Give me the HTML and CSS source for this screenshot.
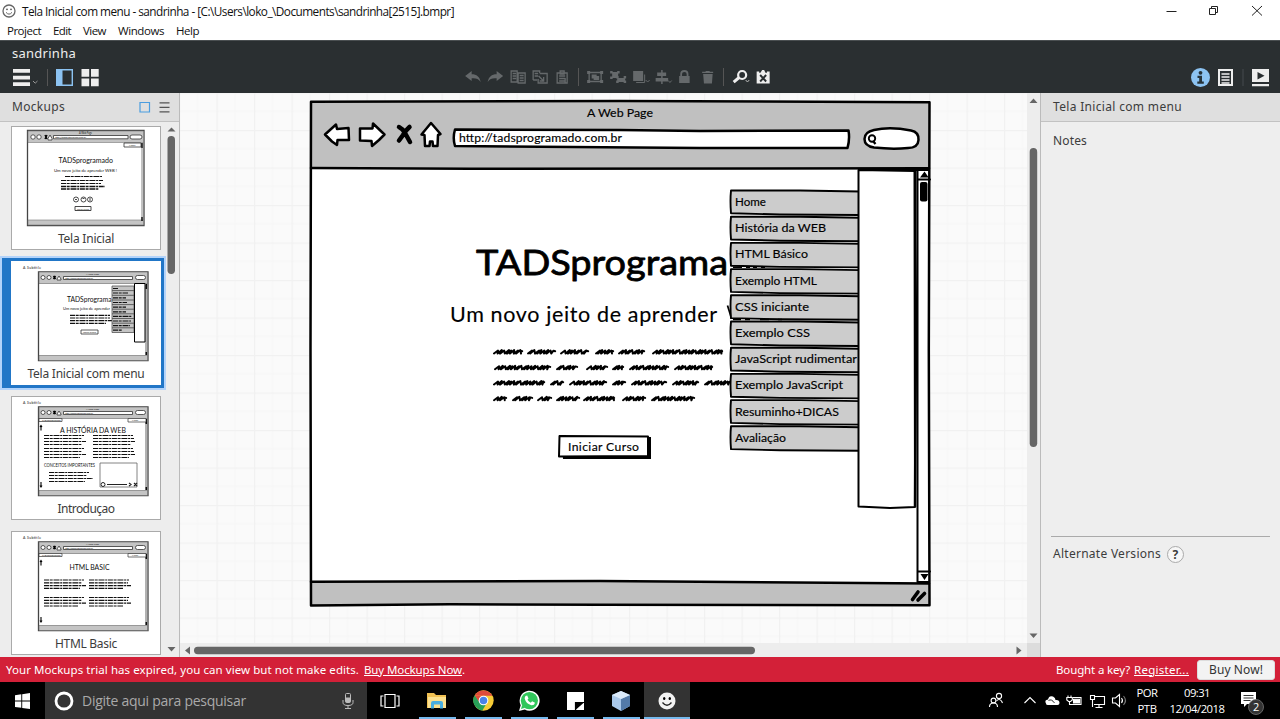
FILE: index.html
```html
<!DOCTYPE html>
<html lang="pt">
<head>
<meta charset="utf-8">
<title>Tela Inicial com menu - sandrinha</title>
<link rel="stylesheet" href="styles.css">
</head>
<body>
<div class="screen">
  <header class="titlebar">
    <div class="title-row">
      <svg class="app-icon" width="14" height="14" viewBox="0 0 14 14"><circle cx="7" cy="7" r="6" fill="#fff" stroke="#666" stroke-width="1.3"/><circle cx="5" cy="5.3" r=".9" fill="#555"/><circle cx="9" cy="5.3" r=".9" fill="#555"/><path d="M4 8.3Q7 12 10 8.3" fill="none" stroke="#666"/></svg>
      <span data-fit="432">Tela Inicial com menu - sandrinha - [C:\Users\loko_\Documents\sandrinha[2515].bmpr]</span>
      <svg class="window-buttons" width="110" height="20" viewBox="1160 0 110 20" fill="none" stroke="#222"><path d="M1166.5 10.5h10M1252 5l10 9.500M1262 5l-10 9.500"/><path d="M1209.500 7.500h6v6h-6zM1211.500 7v-1.500h6v6h-1.500"/></svg>
    </div>
    <nav class="menu-row"><span data-fit="34">Project</span><span data-fit="18">Edit</span><span data-fit="23">View</span><span data-fit="46">Windows</span><span data-fit="23">Help</span></nav>
  </header>

  <section class="toolbar">
    <div class="project-name"><span data-fit="64">sandrinha</span></div>
    <div class="tools">
      <svg class="left-tools" width="100" height="20" viewBox="0 67 100 20">
        <path d="M13 69h17v3.700H13zM13 75.700h17v3.700H13zM13 82.300h17v3.700H13z" fill="#eee"/>
        <path d="M33 81l2.200 2.200L37.500 81" fill="none" stroke="#999"/><path d="M47.500 69v17" stroke="#555"/>
        <path d="M56.700 69.700h15.600v15.600H56.700z" fill="none" stroke="#8cc3f2" stroke-width="1.400"/><path d="M56 69h6.500v17H56z" fill="#8cc3f2"/>
        <path d="M81.500 69h7.700v7.700h-7.700zM91 69h7.700v7.700H91zM81.500 78.500h7.700v7.700h-7.700zM91 78.500h7.700v7.700H91z" fill="#eee"/>
      </svg>
      <div class="center-tools">
        <svg class="tool" viewBox="0 0 22 20"><path d="M3 9L9.500 4v3.200c5 0 8 2.500 9 7.800-2.200-3.500-5-4-9-3.700V14z"/></svg>
        <svg class="tool" viewBox="0 0 22 20"><path d="M19 9L12.500 4v3.200c-5 0-8 2.500-9 7.800 2.200-3.500 5-4 9-3.700V14z"/></svg>
        <svg class="tool line" viewBox="0 0 22 20"><path d="M4 4h6v11H4zM11 6h7v10h-7zM5.500 6.500H9M5.500 9H9M5.500 11.500H9M12.500 8.500h4M12.500 11h4M12.500 13.500h4"/></svg>
        <svg class="tool line" viewBox="0 0 22 20"><path d="M4 13V4h6.500v2M4 13h4M5.500 6.500H9M5.500 9H9M10.500 6.500h7.500v9.500h-9v-4M9.500 9l4.500 4.500M14.500 10v4h-4"/></svg>
        <svg class="tool line" viewBox="0 0 22 20"><path d="M6 6h10v10H6zM9 4h4v3H9zM8 9h6M8 11.500h6M8 14h6M14 11v5"/></svg>
        <i class="divider"></i>
        <svg class="tool line" viewBox="0 0 22 20"><path d="M5 5.500h12v9H5z"/><path class="solid" d="M3 4h3v3H3zM16 4h3v3h-3zM3 13h3v3H3zM16 13h3v3h-3zM7.500 7.500h5V9H15v4H9.500v-1.500h-2z"/></svg>
        <svg class="tool line" viewBox="0 0 22 20"><path class="solid" d="M3 4h2.500v2.500H3zM10 4h2.500v2.500H10zM3 9.500h2.500V12H3zM5 5h6v6H5zM9 9h2.500v2h5V9H19v2.500h-1v2h1V16h-2.500v-1h-5v1H9v-2.500h1v-2H9z"/></svg>
        <svg class="tool" viewBox="0 0 22 20"><path d="M4 4h10v10H4z"/><path d="M7 15.500h8.500V7.500" class="stroke"/><path class="stroke" d="M16.500 13l2 2 2-2"/></svg>
        <svg class="tool" viewBox="0 0 22 20"><path d="M10 3h1.500v2.500H15V9h-3.500v2H17v3.500h-5.500V17H10v-2.500H4.500V11H10V9H6V5.500h4z"/><path class="stroke" d="M17 13.500l1.800 2 1.800-2"/></svg>
        <svg class="tool" viewBox="0 0 22 20"><path d="M6 9h10.500v7H6z"/><path d="M8 10V7q0-3 3.200-3t3.200 3v3" fill="none" stroke="#65696b" stroke-width="1.800"/></svg>
        <svg class="tool" viewBox="0 0 22 20"><path d="M7 7h9.500l-.7 9.500h-8zM6 4.800h3.500V4h4v.8H17V6H6z"/></svg>
        <i class="divider"></i>
        <svg class="tool bright" viewBox="0 0 22 20"><circle cx="13" cy="8" r="4" fill="none" stroke="#eee" stroke-width="2.200"/><path d="M10 10.500l-5.500 4.700" stroke="#eee" stroke-width="3"/><path d="M16.500 13l1.800 2 1.800-2" fill="none" stroke="#bbb"/></svg>
        <svg class="tool bright" viewBox="0 0 22 20"><path d="M5.500 4.500H8v1.300h1.300L11 3h2l1.300 2.800h1.500V4.500h2.700v12h-13z"/><path d="M9 8l6 6.500M15 8l-6 6.500" stroke="#2a2f31" stroke-width="1.900"/></svg>
      </div>
      <svg class="right-tools" width="90" height="22" viewBox="1190 66 90 22"><circle cx="1200.500" cy="77.500" r="9.500" fill="#8cc3f2"/><circle cx="1200.500" cy="72.800" r="1.900" fill="#253239"/><path d="M1197.500 75.800h4.500v5.700h1.800v2.300h-6.500v-2.300h1.900v-3.400h-1.700z" fill="#253239"/><path d="M1219 70h13v15h-13z" fill="none" stroke="#eee" stroke-width="2"/><path d="M1221.500 74h8M1221.500 77h8M1221.500 80h8M1221.500 83h8" stroke="#eee" stroke-width="1.400"/><path d="M1243 69v17" stroke="#444b4e"/><path d="M1252 69h17v13h-17zM1252 84h17v2.200h-17z" fill="#eee"/><path d="M1257.500 72l7 3.700-7 3.700z" fill="#2a2f31"/></svg>
    </div>
  </section>

  <main class="workspace">
    <aside class="sidebar">
      <div class="panel-head"><span data-fit="53">Mockups</span>
        <svg width="32" height="12" viewBox="139 100 32 12"><path d="M140 101.500h9.500v9.500H140z" fill="none" stroke="#4a9de0" stroke-width="1.200"/><path d="M159.500 101.800h10M159.500 106.300h10M159.500 110.800h10" stroke="#555" stroke-width="1.200"/></svg>
      </div>
      <div class="list-area">
        <div class="cards">
          <article class="cell"><div class="card">
            <svg class="thumb" width="148" height="104" viewBox="1 1 148 104">
              <path d="M16.500 4.500H133V99.500H16.500z" fill="#fff" stroke="#444" stroke-width="1.300"/><path d="M17 5H132.500V16.500H17zM17 94h115.500v5H17z" fill="#c4c4c4" stroke="#777" stroke-width=".6"/>
              <g fill="#fff" stroke="#333" stroke-width=".8"><circle cx="22" cy="11" r="2.200"/><circle cx="28" cy="11" r="2.200"/><path d="M37 12.500l2-3.500 2 3.500v1.500h-4zM42.500 9.500H117v3.300H42.500z"/><rect x="119" y="9" width="12" height="4" rx="2"/><path d="M113 17h17v4h-17z"/></g>
              <path d="M34 9l2 4M36 9l-2 4M131 17v5M131 91v4" stroke="#000" stroke-width="1.400"/><path d="M131 17v77" stroke="#333" stroke-width=".6"/>
              <text x="68" y="8" class="mini" font-size="3" textLength="13" lengthAdjust="spacingAndGlyphs">A Web Page</text><text x="44" y="12.300" class="mini" font-size="2.600" textLength="31" lengthAdjust="spacingAndGlyphs">http://tadsprogramado.com.br</text><text x="118" y="20" class="mini" font-size="2.500">Menu</text>
              <text x="47.500" y="36.500" class="mini" font-size="7" textLength="54.500" lengthAdjust="spacingAndGlyphs">TADSprogramado</text><text x="43" y="45.500" class="mini" font-size="4.500" textLength="63" lengthAdjust="spacingAndGlyphs">Um novo jeito de aprender WEB !</text>
              <g class="greek"><path d="M54 50.500h37M50 54.500h42M50 57.500h40"/><path d="M50 60.500h44M50 63h38" stroke-width="1.500"/></g>
              <g fill="none" stroke="#333" stroke-width=".9"><circle cx="65" cy="73.500" r="2.500"/><circle cx="72.500" cy="73.500" r="2.500"/><circle cx="79" cy="73.500" r="2.500"/><path d="M64 73.500h2M71.500 72.500h2M79 72v3"/><path d="M64 80.500h16v4H64z"/></g><text x="66" y="83.600" class="mini" font-size="2.600" textLength="12" lengthAdjust="spacingAndGlyphs">Iniciar Curso</text>
            </svg><div class="label"><span data-fit="56">Tela Inicial</span></div>
          </div></article>
          <article class="cell selected"><div class="card">
            <svg class="thumb" width="148" height="104" viewBox="1 1 148 104"><use href="#mini-browser"/>
              <text x="56" y="41" class="mini" font-size="7" textLength="44.500" lengthAdjust="spacingAndGlyphs">TADSprograma</text><text x="52" y="49" class="mini" font-size="4.500" textLength="47" lengthAdjust="spacingAndGlyphs">Um novo jeito de aprender</text>
              <g class="greek"><path d="M59 54.300h40M59 57h40M59 59.700h44M59 62.400h36" stroke-width="1.200"/></g><path d="M70 69h17v4H70z" fill="#fff" stroke="#333" stroke-width=".8"/><text x="72" y="72" class="mini" font-size="2.600" textLength="13" lengthAdjust="spacingAndGlyphs">Iniciar Curso</text>
              <path d="M101 25h22v46.500h-22z" fill="#c4c4c4" stroke="#555" stroke-width=".8"/><path d="M101 29.600h22M101 34.300h22M101 39h22M101 43.600h22M101 48.200h22M101 52.800h22M101 57.500h22M101 62.200h22M101 66.800h22" stroke="#555" stroke-width=".9"/><g class="greek"><path d="M102 27.500h5M102 32h15M102 36.800h13M102 41.500h14M102 46.200h13M102 50.800h13M102 55.300h19M102 60h18M102 64.700h17M102 69.200h9"/></g>
              <path d="M123.500 22.500H134V81h-10.500z" fill="#fff" stroke="#000"/>
            </svg><div class="label"><span data-fit="117">Tela Inicial com menu</span></div>
          </div></article>
          <article class="cell"><div class="card">
            <svg class="thumb" width="148" height="104" viewBox="1 1 148 104"><use href="#mini-browser"/><use href="#mini-tabs"/>
              <text x="49" y="36.500" class="mini" font-size="7" textLength="66" lengthAdjust="spacingAndGlyphs">A HISTÓRIA DA WEB</text>
              <g class="greek"><path d="M33 39.500h40M33 42.500h38M33 45.500h42M33 48.500h38M33 52.500h40M33 55.500h38M33 58.500h42M33 61.500h36M82 39.500h40M82 42.500h41M82 45.500h42M82 48.500h38M82 52.500h40M82 55.500h41M82 58.500h42M82 61.500h36M38 76.500h40M38 79.500h38M38 82.500h44M38 85.500h36"/></g>
              <text x="33" y="70.500" class="mini" font-size="5" textLength="51" lengthAdjust="spacingAndGlyphs">CONCEITOS IMPORTANTES</text>
              <path d="M89 67h37v24H89z" fill="#fff" stroke="#666" stroke-width=".8"/><circle cx="92" cy="88.500" r="2" fill="none" stroke="#222"/><path d="M96 88.500h20M118 87l2 1.500-2 1.500M123 87l3 3M126 87l-3 3" fill="none" stroke="#222" stroke-width="1.200"/>
            </svg><div class="label"><span data-fit="57">Introduçao</span></div>
          </div></article>
          <article class="cell"><div class="card">
            <svg class="thumb" width="148" height="104" viewBox="1 1 148 104"><use href="#mini-browser"/><use href="#mini-tabs"/>
              <text x="58.500" y="38.500" class="mini" font-size="7" textLength="40" lengthAdjust="spacingAndGlyphs">HTML BASIC</text>
              <g class="greek"><path d="M33 49h40M33 51.800h38M33 54.600h42M33 57.400h36M78 49h40M78 51.800h39M78 54.600h42M78 57.400h34M33 66.500h40M33 69.300h38M33 72.200h42M33 75h34M78 66.500h40M78 69.300h39M78 72.200h42M78 75h34"/></g>
            </svg><div class="label"><span data-fit="62">HTML Basic</span></div>
          </div></article>
        </div>
        <svg class="side-scroll" width="13" height="535" viewBox="167 122 13 535"><path d="M168.500 131.500l4-4 4 4zM168.500 647l4 4.500 4-4.500z" fill="#666"/><rect x="168.500" y="136" width="7.500" height="138" rx="3.700" fill="#666"/></svg>
      </div>
    </aside>

    <section class="canvas-col">
      <div class="canvas-row">
        <svg class="canvas" width="847" height="550" viewBox="180 93 847 550">
          <defs>
            <pattern id="grid" x="216.500" y="130" width="37.500" height="37.500" patternUnits="userSpaceOnUse"><path d="M18.700 0v37.500M0 18.700h37.500" stroke="#f6f6f6"/><path d="M.5 0v37.500M0 .5h37.500" stroke="#f1f1f1" stroke-width="1.600"/></pattern>
            <g id="mini-browser"><text x="12" y="8" class="mini" font-size="3.500" textLength="18">A Subtitle</text><path d="M27.500 11H137V99.500H27.500z" fill="#fff" stroke="#444" stroke-width="1.300"/><path d="M28 11h108.500V22.500H28zM28 94.500h108.500v5H28z" fill="#c4c4c4" stroke="#666" stroke-width=".6"/><g fill="#fff" stroke="#333" stroke-width=".8"><circle cx="32" cy="16.500" r="2"/><circle cx="38" cy="16.500" r="2"/><path d="M46 18l2-3 2 3v1h-4zM52.500 15.500h69v3h-69z"/><rect x="124.500" y="14.500" width="10" height="4" rx="2"/></g><path d="M42.500 15l2 3M44.500 15l-2 3M135.300 23v5M135.300 91v3" stroke="#000" stroke-width="1.500"/><path d="M135 24v70" stroke="#222" stroke-width=".7"/><text x="75" y="13.500" class="mini" font-size="2.600" textLength="13" lengthAdjust="spacingAndGlyphs">A Web Page</text><text x="54" y="17.800" class="mini" font-size="2.400" textLength="28" lengthAdjust="spacingAndGlyphs">http://tadsprogramado.com.br</text></g>
            <g id="mini-tabs"><path d="M28 22.500h23v3H28zM117 22.500h18v3.500h-18z" fill="#fff" stroke="#333" stroke-width=".7"/><text x="31" y="25" class="mini" font-size="2.400">TADSprogramado</text><text x="121" y="25" class="mini" font-size="2.400">Menu</text><path d="M30 29.500v5M29 31l1-1.500 1 1.500M30 86v5M29 89.500l1 1.500 1-1.500" fill="none" stroke="#000" stroke-width="1.100"/></g>
          </defs>
          <rect x="180" y="93" width="847" height="550" fill="#fafafa"/><rect x="180" y="93" width="847" height="550" fill="url(#grid)"/>
          <path d="M311.500 101.500L929 102L929.500 605L600 604.500L311 605.500z" fill="#fff"/>
          <path d="M311.500 101.500L929 102V168.500L312 168z" fill="#c0c0c0"/><path d="M312 581.500L700 581.500L929 583.500V605H311z" fill="#c0c0c0"/>
          <g class="ink"><path d="M311 101.800L620 101L929.500 102.300L928.800 350L929.500 605.200L600 604.700L450 604.200L311 605.500L310.500 350z"/><path d="M311 168L470 168.800L929 168.300M311 581.800L600 581L929 583.500"/></g>
          <g class="sketch-text"><text x="587" y="117" font-size="12" textLength="66" lengthAdjust="spacingAndGlyphs">A Web Page</text></g>
          <g class="ink white"><path d="M325 134.500L336 124.500L337 129L348.500 128L349 140L337.500 140L337 145L332 141.500z"/><path d="M384.500 134.500L373 123.500L372.500 128.500L360 128.500L360 140.500L371.500 141L372 146L379 140z"/><path d="M431 123L421.500 134.500L424.500 135L425 146L429.500 146L430 141.500L432.500 141.500L433 146L437.500 146L438 135L440.500 134z"/></g>
          <path d="M399 127Q403 129 405 133L410 142M409.500 127Q405 131 403 135L399 140.500" fill="none" stroke="#000" stroke-width="4.500" stroke-linecap="round"/>
          <path class="ink white" d="M455 129.500L620 130L700 131L848.500 130.500Q850 139 847.500 148L700 148L455 146Q452.500 138 455 129.500z"/>
          <g class="sketch-text"><text x="459" y="142" font-size="12.200" textLength="163">http://tadsprogramado.com.br</text></g>
          <path class="ink white" d="M874 130Q890 126.500 911 130.500Q919 132 918.500 140Q918 148 908 148Q892 149.500 874 147.500Q864.500 146 864.500 139Q864.500 132 874 130z"/><circle cx="872" cy="138.500" r="3.200" fill="none" stroke="#000" stroke-width="1.900"/><path d="M873 141l2.500 3" stroke="#000" stroke-width="2.200"/>

          <g class="sketch-text"><text x="476" y="274.500" font-size="35.500" textLength="252" lengthAdjust="spacingAndGlyphs" class="headline">TADSprograma</text><text x="450" y="322" font-size="21.500" textLength="267" lengthAdjust="spacing">Um novo jeito de aprender</text></g>
          <path d="M727.500 305.500l4 13" stroke="#000" stroke-width="1.700"/>
          <g id="scribbles" fill="none" stroke="#000" stroke-width="2" stroke-linejoin="round" stroke-linecap="round"></g>
          <path d="M561 437h90v22h-88z" fill="#000"/><path class="ink thin white" d="M559.500 436L648 436.500L648 456L559 456.500z"/>
          <g class="sketch-text"><text x="568" y="450.500" font-size="12.200" textLength="71">Iniciar Curso</text></g>
          <g id="menu-items"></g>
          <path d="M733 267.300h9M746 267.300h4M753 267.300h4M761 267.300h4M733 319.600h8M745 319.600h5M760 319.600h9M778 319.600h4" stroke="#000" stroke-width="1.500"/>
          <path class="ink thin white" d="M858.500 170L914.500 171L915 507L890 508L858.500 506.500z"/>
          <path class="ink thin" d="M917.500 170V582M918 179.500H930M918 571.500H930"/><path d="M915.300 171V240L916 330L915 507" fill="none" stroke="#000" stroke-width="2.500"/><path d="M858 169.500h72" stroke="#000" stroke-width="3"/>
          <path d="M920 177.500l4.500-6 4.200 6zM920.500 574h8l-4 6z"/><rect x="920" y="182" width="7.500" height="19.500" rx="2"/><path d="M912.500 599.500l5.500-7.500M918 600l6.500-6.500" stroke="#000" stroke-width="3.600" stroke-linecap="round"/><path d="M918 582.500h11" stroke="#000" stroke-width="3"/>
        </svg>
        <svg class="v-scroll" width="14" height="550" viewBox="1027 93 14 550"><path d="M1029.500 103l4-4.500 4 4.500zM1029.500 633.500l4 4.500 4-4.500z" fill="#666"/><rect x="1029.700" y="148" width="7.500" height="299" rx="3.700" fill="#666"/></svg>
      </div>
      <div class="h-row"><svg width="847" height="14" viewBox="180 643 847 14"><path d="M190 646.500v8l-5-4zM1016.500 646.500v8l5-4z" fill="#666"/><rect x="194" y="646.700" width="561" height="7.500" rx="3.700" fill="#666"/></svg><div class="corner"></div></div>
    </section>

    <aside class="inspector">
      <div class="panel-head"><span data-fit="129">Tela Inicial com menu</span></div>
      <div class="notes"><span data-fit="34">Notes</span></div>
      <div class="versions"><span data-fit="108">Alternate Versions</span><b class="help">?</b></div>
    </aside>
  </main>

  <div class="banner">
    <span data-fit="353">Your Mockups trial has expired, you can view but not make edits.</span><u class="buy-link" data-fit="98">Buy Mockups Now</u><span>.</span>
    <span class="key" data-fit="74">Bought a key?</span><u class="register" data-fit="55">Register...</u><button class="buy" type="button"><span data-fit="54">Buy Now!</span></button>
  </div>

  <footer class="taskbar">
    <div class="start"><svg width="15" height="16" viewBox="0 0 15 16" fill="#fff"><path d="M0 2.200l6.300-.9v6.300H0zM7.200 1.200L15 0v7.600H7.200zM0 8.500h6.300v6.300L0 13.900zM7.200 8.500H15V16l-7.800-1.100z"/></svg></div>
    <div class="search"><svg width="20" height="20" viewBox="0 0 20 20"><circle cx="10" cy="10" r="8" fill="none" stroke="#fff" stroke-width="2.800"/></svg><span data-fit="164">Digite aqui para pesquisar</span><svg class="mic" width="12" height="16" viewBox="0 0 12 16" fill="none" stroke="#bbb"><rect x="3.500" y=".5" width="5" height="9" rx="1"/><path d="M4 5h4v4H4z" fill="#bbb"/><path d="M1 7v2.500q0 3 5 3t5-3V7M6 12.500v3M3 15.500h6"/></svg></div>
    <div class="task view"><svg width="20" height="16" viewBox="0 0 20 16" fill="none" stroke="#fff" stroke-width="1.200"><path d="M5 1.500h10v13H5zM3.500 3H1v10h2.500M16.500 3H19v10h-2.500"/></svg></div>
    <div class="task open"><svg width="20" height="18" viewBox="0 0 20 18"><path d="M0 1h7l2 2h10v13H0z" fill="#f0c052"/><path d="M1 5h18v11H1z" fill="#fbe08f"/><path d="M4 16.500V11q0-2 2-2h8q2 0 2 2v5.500h-3v-4H7v4z" fill="#48aee0"/></svg></div>
    <div class="task open"><svg width="21" height="21" viewBox="0 0 20 20"><circle cx="10" cy="10" r="9.700" fill="#f7cc36"/><path d="M1.600 5.200A9.700 9.700 0 0 1 18.500 5.500H10z" fill="#df4b3b"/><path d="M1.600 5.200A9.700 9.700 0 0 0 9 19.600l4.500-8H6.300z" fill="#28a058"/><path d="M1.600 5.200L6 12l4-6.500z" fill="#df4b3b"/><path d="M1.600 5.200A9.700 9.700 0 0 0 1.300 14L6 12z" fill="#28a058"/><circle cx="10" cy="10" r="4.600" fill="#fff"/><circle cx="10" cy="10" r="3.600" fill="#4a82e8"/></svg></div>
    <div class="task open"><svg width="22" height="22" viewBox="0 0 22 22"><path d="M1 21l1.700-5.700A10 10 0 1 1 6.800 19.500z" fill="#fff"/><circle cx="11.400" cy="10.600" r="8.600" fill="#31c65b"/><path d="M3 19l1.200-4.200 3 3z" fill="#31c65b"/><path d="M7.500 6l1.700-.5 1.300 3-1 1.300q1.300 2 3.300 2.900l1.300-1.400 2.900 1.500q-.5 2.700-3.500 2.500Q8 13.900 6.700 8.500 6.600 7 7.500 6z" fill="#fff"/></svg></div>
    <div class="task open"><svg width="17" height="18" viewBox="0 0 17 18"><path d="M0 0h17v18H0z" fill="#fff"/><path d="M8.500 18v-7.500H17z" fill="#000"/><path d="M8.500 18v-7.500H17" fill="none" stroke="#000" stroke-width="1.200"/></svg></div>
    <div class="task open"><svg width="20" height="22" viewBox="0 0 20 22"><path d="M10 1l9 4v11l-9 5-9-5V5z" fill="#a9c8ea"/><path d="M10 9l9-4v11l-9 5z" fill="#537aa9"/><path d="M10 1l9 4-9 4-9-4z" fill="#dbeafa"/></svg></div>
    <div class="task open active"><svg width="18" height="18" viewBox="0 0 18 18"><circle cx="9" cy="9" r="8.500" fill="#f2f2f2"/><ellipse cx="6.200" cy="6.500" rx="1.200" ry="1.600"/><ellipse cx="11.800" cy="6.500" rx="1.200" ry="1.600"/><path d="M4.500 10.500Q9 16 13.500 10.500" fill="none" stroke="#222" stroke-width="1.300"/></svg></div>
    <svg class="tray" width="150" height="37" viewBox="984 682 150 37" fill="none" stroke="#fff" stroke-width="1.100">
      <circle cx="999" cy="696" r="2.600"/><path d="M996.500 701q2.500-3 5 0l1 2"/><circle cx="993.500" cy="700.500" r="2.400"/><path d="M989.500 707q0-4 4-4t4 4"/>
      <path d="M1024.500 703l5.500-5.500 5.500 5.500"/>
      <path d="M1046 703.500q-2-3.500 2-4 1-4.500 5-3 2.500 1 2.500 3.500 4-.5 4 3 0 2-2 2h-9.500q-2 0-2-1.500z" fill="#fff" stroke="none"/>
      <path d="M1048.500 700.500q3-2 6 2.500" stroke="#000" stroke-width=".8"/>
      <path d="M1073 697.500h8v7h-9M1068 695.500v2M1071 695.500v2M1066.800 697.500h5.500v2.500l-1.700 1.500h-2l-1.800-1.500zM1069.500 702v2.500h2.500"/><path d="M1073.500 699.300h6v3.700h-6z" fill="#fff"/>
      <path d="M1095 696.500h9.500v8H1094M1099 704.500v2.500M1095.500 707.500h7M1090.500 695.500h4v4h-4zM1092.500 700v7"/>
      <path d="M1112.500 698h3l4-3.500v12l-4-3.500h-3z"/><path d="M1121.500 698q2 2.500 0 5"/><path d="M1123.500 696q4 4.500 0 9" stroke="#777"/>
    </svg>
    <div class="two-line lang"><span data-fit="21">POR</span><span data-fit="19">PTB</span></div>
    <div class="two-line clock"><span data-fit="26">09:31</span><span data-fit="55">12/04/2018</span></div>
    <svg class="notify" width="26" height="26" viewBox="0 0 26 26"><path d="M2 2h15v12H8l-3 3v-3H2z" fill="#fff"/><path d="M4.500 5.500h10M4.500 8h10M4.500 10.500h7" stroke="#333"/><circle cx="17" cy="17" r="7.500" fill="#333" stroke="#777" stroke-width=".8"/><text x="14" y="21" fill="#fff" font-size="11" font-family="Open Sans, sans-serif">2</text></svg>
  </footer>
</div>
<script src="app.js"></script>
</body>
</html>
```

FILE: styles.css
```css
* { box-sizing: border-box; }
body { margin: 0; overflow: hidden; }
svg { display: block; flex: none; }
.screen { width: 1280px; height: 719px; display: flex; flex-direction: column; font: 11.800px/16px "Open Sans", sans-serif; color: #111; background: #fff; }
span, u { white-space: pre; }

.titlebar { height: 40px; }
.title-row { height: 21px; display: flex; align-items: center; padding-left: 2px; }
.app-icon { margin-right: 6px; }
.window-buttons { margin-left: auto; margin-right: 10px; }
.menu-row { height: 19px; display: flex; align-items: center; gap: 12px; padding-left: 7px; font-size: 11.500px; }

.toolbar { height: 53px; background: #2a2f31; border-top: 1px solid #4a4f51; }
.project-name { height: 25px; padding: 4px 0 0 12px; color: #eee; font: 13px/17px "Noto Sans", sans-serif; }
.tools { display: flex; align-items: center; height: 22px; }
.center-tools { display: flex; align-items: center; margin-left: 362px; }
.tool { width: 22.300px; height: 20px; fill: #65696b; }
.line { fill: none; stroke: #65696b; stroke-width: 1.300; }
.solid { fill: #65696b; stroke: none; }
.stroke { fill: none; stroke: #65696b; }
.bright { fill: #eee; }
.divider { width: 10.800px; height: 18px; background: linear-gradient(#555, #555) center / 1px 100% no-repeat; }
.right-tools { margin-left: auto; }

.workspace { height: 564px; display: flex; font-family: "Noto Sans", sans-serif; font-size: 12px; color: #3c3c3c; }
.sidebar { width: 180px; background: #ededed; border-right: 1px solid #bbb; }
.panel-head { height: 29px; padding: 0 8px 1px 12px; background: #dfdfdf; border-bottom: 1px solid #c2c2c2; display: flex; justify-content: space-between; align-items: center; }
.list-area { display: flex; height: 535px; overflow: hidden; }
.cards { width: 167px; margin-top: -1px; }
.cell { width: 166px; height: 135px; padding: 5px 5px 0 11px; }
.selected { background: #2176c7; box-shadow: inset 0 0 0 2px #b3d3fa; height: 134px; margin-bottom: 1px; }
.card { width: 150px; height: 124px; background: #fff; border: 1px solid #aaa; }
.selected .card { border-color: #fff; }
.label { text-align: center; line-height: 17px; margin-top: -1px; }
.mini { font-family: Lato, sans-serif; fill: #111; }
.greek { fill: none; stroke: #111; stroke-width: 1.200; stroke-dasharray: 5 .7 3 .8 6 .7 2 .7; }

.canvas-col { width: 860px; }
.canvas-row, .h-row { display: flex; background: #ededed; }
.corner { width: 13px; height: 14px; background: #dcdcdc; }
.v-scroll { margin-right: -1px; }
.ink { fill: none; stroke: #000; stroke-width: 2.500; stroke-linejoin: round; stroke-linecap: round; }
.white { fill: #fff; }
.thin { stroke-width: 2; }
.sketch-text { font-family: Lato, sans-serif; fill: #000; stroke: #000; stroke-width: .15; }
.headline { stroke-width: .8; stroke-linejoin: round; }
.menu-item { fill: #ccc; stroke: #000; stroke-width: 1.900; stroke-linejoin: round; }

.inspector { width: 240px; background: #eee; border-left: 1px solid #bbb; display: flex; flex-direction: column; }
.notes { padding: 11px 12px; height: 414px; }
.versions { margin: 0 10px; padding: 7px 2px; border-top: 1px solid #aaa; display: flex; gap: 6px; align-items: center; line-height: 20px; }
.help { width: 17px; height: 17px; border: 1px solid #aaa; border-radius: 50%; background: #f7f7f7; font-size: 12px; line-height: 15px; text-align: center; }

.banner { height: 25px; background: #d32038; color: #fff; display: flex; align-items: center; padding: 0 5px 0 6px; font: 11.500px/16px "Noto Sans", sans-serif; }
.buy-link { margin-left: 5px; }
.key { margin-left: auto; }
.register { margin: 0 8px 0 4px; }
.buy { width: 78px; height: 20px; padding: 0; border: 1px solid #ddd; border-radius: 3px; background: #f3f3f3; color: #333; font: 12px/16px "Noto Sans", sans-serif; text-align: center; }

.taskbar { height: 37px; background: #000; color: #fff; display: flex; align-items: center; }
.start { width: 45px; display: flex; justify-content: center; }
.search { width: 322px; height: 37px; background: #333; color: #aaa; display: flex; align-items: center; padding-left: 9px; gap: 8px; font-size: 14px; }
.mic { margin-left: auto; margin-right: 13px; }
.task { width: 46px; height: 37px; display: flex; align-items: center; justify-content: center; }
.view { width: 47px; padding-right: 2px; }
.open { background: linear-gradient(#76b9ed, #76b9ed) bottom / 37px 2px no-repeat; }
.active { background: linear-gradient(#76b9ed, #76b9ed) bottom / 100% 2px no-repeat #333; }
.tray { margin-left: auto; }
.two-line { display: flex; flex-direction: column; align-items: center; line-height: 16px; font-size: 11.300px; }
.lang { width: 26px; }
.clock { width: 74px; }
.notify { margin: 4px 15px 0 5px; width: 26px; }
```

FILE: app.js
```js
// Tune letter spacing so each label fills its designed width.
document.querySelectorAll("[data-fit]").forEach(function (el) {
  el.style.display = "inline-block";
  var target = Number(el.dataset.fit);
  var n = el.textContent.length;
  var spacing = (target - el.getBoundingClientRect().width) / n;
  el.style.letterSpacing = spacing.toFixed(3) + "px";
});

var NS = "http://www.w3.org/2000/svg";
function add(parent, tag, attrs, text) {
  var node = document.createElementNS(NS, tag);
  Object.keys(attrs).forEach(function (k) { node.setAttribute(k, attrs[k]); });
  if (text) node.textContent = text;
  parent.appendChild(node);
}

// Block of greeked text: each pair is the start and end of a scribbled word.
var rows = [
  [352, [493,523],[527,556],[560,589],[595,614],[618,645],[652,723]],
  [367.7, [494,551],[556,578],[586,608],[612,624],[629,669],[674,713]],
  [383, [493,545],[550,564],[569,607],[612,626],[631,667],[672,699],[704,732]],
  [398.700, [493,507],[512,533],[537,552],[556,580],[583,615],[622,646],[651,695]]
];
var group = document.getElementById("scribbles");
rows.forEach(function (row) {
  row.slice(1).forEach(function (word, w) {
    var x = word[0] + 1, i = 0, d = "M" + x + " " + (row[0] + 1.500);
    while (x < word[1] - 5) {
      var step = [3.800, 2.400, 4.800, 2.200, 3][(i + w) % 5];
      d += "L" + (x + 4) + " " + (row[0] - 1.500 - (i % 2) * 0.400) + "L" + (x + step - 0.200) + " " + (row[0] + 1.600);
      x += step;
      i++;
    }
    d += "L" + (word[1] - 2.500) + " " + (row[0] - 1.300) + "L" + (word[1] - 0.800) + " " + (row[0] - 0.800);
    add(group, "path", { d: d });
  });
});

var items = [["Home", 31], ["História da WEB", 91], ["HTML Básico", 73], ["Exemplo HTML", 82], ["CSS iniciante", 74], ["Exemplo CSS", 75], ["JavaScript rudimentar", 122], ["Exemplo JavaScript", 108], ["Resuminho+DICAS", 104], ["Avaliação", 51]];
var menu = document.getElementById("menu-items");
items.forEach(function (item, i) {
  var y = 190.500 + i * 26.200;
  add(menu, "path", { "class": "menu-item", d: "M731 " + y + "L800 " + y + "L860 " + (y + 1) + "V" + (y + 24.500) + "L780 " + (y + 24) + "L731 " + (y + 22.800) + "Q730 " + (y + 10) + " 731 " + y + "z" });
  add(menu, "text", { "class": "sketch-text", x: 735, y: y + 15.500, "font-size": 12.200, textLength: item[1], lengthAdjust: "spacingAndGlyphs" }, item[0]);
});
```
